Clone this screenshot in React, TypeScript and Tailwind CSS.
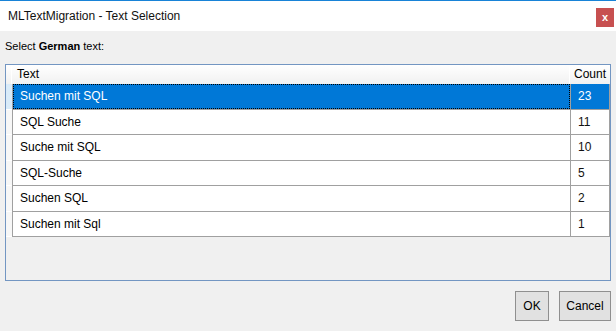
import React from 'react';

const rows: { text: string; count: number }[] = [
  { text: 'Suchen mit SQL', count: 23 },
  { text: 'SQL Suche', count: 11 },
  { text: 'Suche mit SQL', count: 10 },
  { text: 'SQL-Suche', count: 5 },
  { text: 'Suchen SQL', count: 2 },
  { text: 'Suchen mit Sql', count: 1 }
];

const App = (): JSX.Element => {
  const selected = 0;

  return (
    <div className="w-[616px] h-[331px] bg-[#f0f0f0] flex flex-col font-['Liberation_Sans',Arial,sans-serif] text-black overflow-hidden">
      {/* title bar */}
      <div className="h-[31px] bg-white border-t border-[#1883d7] flex items-start justify-between pl-[8px] pr-[2px]">
        <span className="text-[12px] leading-[14px] mt-[8px] text-[#111]">MLTextMigration - Text Selection</span>
        <div className="w-[18px] h-[19px] mt-[7px] bg-[#c75050] text-white flex items-center justify-center text-[11px] font-bold leading-none pb-[1px]">
          x
        </div>
      </div>

      <div className="h-[33px] pl-[5px] pt-[8px] text-[11px] leading-[14px]">
        Select <b>German</b> text:
      </div>

      {/* grid box */}
      <div className="ml-[5px] w-[606px] h-[217px] border border-[#7396c2] bg-[#f0f0f0] flex flex-col">
        <div className="h-[19px] flex bg-gradient-to-b from-white to-[#f1f1f1] text-[12px] leading-[19px]">
          <div className="w-[6px] border-r border-white" />
          <div className="w-[558px] pl-[5px] border-r border-white">Text</div>
          <div className="w-[39px] pl-[4px]">Count</div>
        </div>
        {rows.map((row, i) => {
          const isSel = i === selected;
          return (
            <div key={row.text} className="h-[25.5px] flex text-[12px]">
              <div className={`w-[6px] border-b border-white ${isSel ? 'bg-[#d9ebf9]' : 'bg-[#f7f7f7]'}`} />
              <div className="w-[558px] border-l border-b border-[#a0a0a0] flex">
                <div
                  className={
                    isSel
                      ? 'flex-1 flex items-center pl-[6px] bg-[#0078d7] text-white border border-dotted border-black'
                      : 'flex-1 flex items-center pl-[7px] bg-white'
                  }
                >
                  {row.text}
                </div>
              </div>
              <div
                className={`w-[40px] border-l border-r border-b border-[#a0a0a0] flex items-center pl-[7px] ${
                  isSel ? 'bg-[#0078d7] text-white' : 'bg-white text-[#111]'
                }`}
              >
                {row.count}
              </div>
            </div>
          );
        })}
      </div>

      {/* buttons */}
      <div className="flex justify-end gap-[10px] pr-[5px] mt-[10px]">
        <button type="button" className="w-[34px] h-[30px] bg-[#e1e1e1] border border-[#8f8f8f] text-[12px]">
          OK
        </button>
        <button type="button" className="w-[52px] h-[30px] bg-[#e1e1e1] border border-[#8f8f8f] text-[12px]">
          Cancel
        </button>
      </div>
    </div>
  );
};

export default App;
